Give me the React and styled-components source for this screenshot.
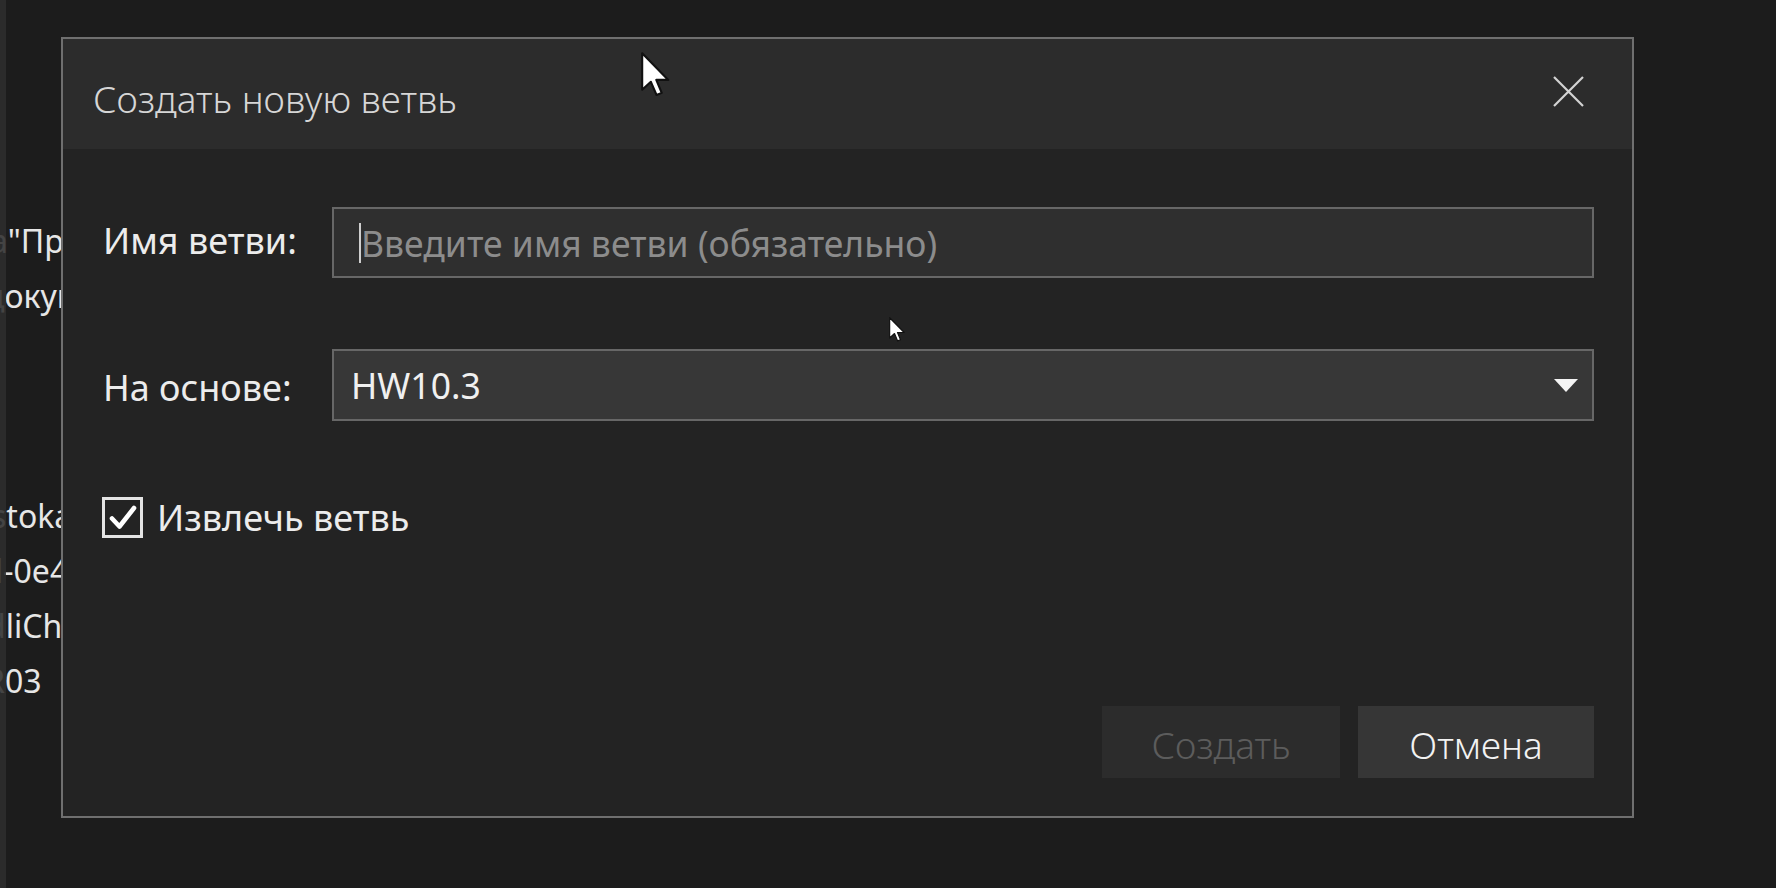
import React from "react";
import styled, { createGlobalStyle } from "styled-components";

const GlobalStyle = createGlobalStyle`
  html, body {
    margin: 0;
    padding: 0;
    background: #1e1e1e;
  }
  body {
    font-family: "Noto Sans", "Open Sans", "DejaVu Sans", sans-serif;
  }
`;

const Page = styled.div`
  position: relative;
  width: 1776px;
  height: 888px;
  overflow: hidden;
  background: #1c1c1c;
  display: flex;
`;

// strip of the document visible left of the dialog
const DocPane = styled.div`
  width: 61px;
  flex-shrink: 0;
  overflow: hidden;
  display: flex;
  flex-direction: column;
  padding-top: 213px;
  color: #e6e6e6;
  font-size: 32px;
  line-height: 55px;
  white-space: nowrap;
`;

const DocLine = styled.div`
  height: 55px;
  margin-left: ${({ $shift }) => $shift}px;
`;

const Splitter = styled.div`
  position: absolute;
  left: 0;
  top: 0;
  bottom: 0;
  width: 6px;
  background: rgba(46, 46, 46, 0.88);
`;

const Dialog = styled.div`
  position: absolute;
  left: 61px;
  top: 37px;
  width: 1573px;
  height: 781px;
  box-sizing: border-box;
  border: 2px solid #6f6f6f;
  background: #232323;
  display: flex;
  flex-direction: column;
`;

const Header = styled.div`
  height: 110px;
  flex-shrink: 0;
  background: #2c2c2c;
  display: flex;
  align-items: center;
  justify-content: space-between;
  padding: 8px 47px 0 30px;
  box-sizing: border-box;
`;

const Title = styled.div`
  color: #d6d6d6;
  font-size: 37px;
  font-weight: 300;
`;

const CloseButton = styled.button`
  width: 33px;
  height: 33px;
  margin-top: -14px;
  padding: 0;
  border: none;
  background: transparent;
  display: flex;
  align-items: center;
  justify-content: center;
`;

const Body = styled.div`
  flex: 1;
  display: flex;
  flex-direction: column;
  padding: 58px 38px 38px 39px;
`;

const Form = styled.div`
  display: grid;
  grid-template-columns: 230px 1fr;
  row-gap: 71px;
  align-items: center;
`;

const Label = styled.label`
  color: #ececec;
  font-size: 36px;
  padding-left: 1px;
  margin-top: ${({ $dy }) => $dy * 2}px;
`;

const Field = styled.div`
  height: ${({ $h }) => $h}px;
  box-sizing: border-box;
  border: 2px solid #676767;
  background: ${({ $bg }) => $bg};
  display: flex;
  align-items: center;
  padding: 0 14px 0 ${({ $pl }) => $pl}px;
  font-size: 35.5px;
  color: #f0f0f0;
`;

const Caret = styled.span`
  width: 2px;
  height: 40px;
  background: #cfcfcf;
  flex-shrink: 0;
`;

const TextInput = styled.input`
  flex: 1;
  border: none;
  outline: none;
  background: transparent;
  font: inherit;
  color: #f0f0f0;
  padding: 0;
  &::placeholder {
    color: #8c8c8c;
  }
`;

const SelectValue = styled.span`
  flex: 1;
`;

const CheckRow = styled.label`
  margin-top: 72px;
  display: flex;
  align-items: center;
  gap: 14px;
  color: #ececec;
  font-size: 36px;
`;

const CheckBox = styled.span`
  width: 41px;
  height: 41px;
  box-sizing: border-box;
  border: 3.5px solid #e4e4e4;
  display: flex;
  align-items: center;
  justify-content: center;
`;

const Footer = styled.div`
  margin-top: auto;
  display: flex;
  justify-content: flex-end;
  gap: 18px;
`;

const Button = styled.button`
  width: ${({ $w }) => $w}px;
  height: 72px;
  border: none;
  background: ${({ disabled }) => (disabled ? "#2c2c2c" : "#363636")};
  color: ${({ disabled }) => (disabled ? "#5c5c5c" : "#f2f2f2")};
  font-family: inherit;
  font-size: 37px;
  font-weight: 300;
  padding: 0;
  padding-top: 4px;
`;

const Cursor = styled.svg`
  position: absolute;
  left: ${({ $x }) => $x}px;
  top: ${({ $y }) => $y}px;
`;

function Arrow({ x, y, h }) {
  return (
    <Cursor $x={x} $y={y} width={h * 0.68} height={h} viewBox="0 0 13 19">
      <path
        d="M0.5 0.5 L0.5 16 L4.2 12.6 L6.6 18.2 L8.8 17.3 L6.5 11.8 L11.6 11.8 Z"
        fill="#ffffff"
        stroke="#111111"
        strokeWidth="0.9"
        strokeLinejoin="round"
      />
    </Cursor>
  );
}

const docLines = [
  { text: 'a"Программа', shift: -10 },
  { text: "документ", shift: -15 },
  { text: "", shift: 0 },
  { text: "", shift: 0 },
  { text: "", shift: 0 },
  { text: "stokari", shift: -9 },
  { text: "l-0e4b", shift: -5 },
  { text: "dliChange", shift: -14 },
  { text: "R03", shift: -15 },
];

export default function App() {
  return (
    <>
      <GlobalStyle />
      <Page>
        <DocPane>
          {docLines.map((l, i) => (
            <DocLine key={i} $shift={l.shift}>
              {l.text}
            </DocLine>
          ))}
        </DocPane>
        <Splitter />

        <Dialog>
          <Header>
            <Title>Создать новую ветвь</Title>
            <CloseButton aria-label="Закрыть">
              <svg width="33" height="33" viewBox="0 0 33 33">
                <path d="M2 2 L31 31 M31 2 L2 31" stroke="#d4d4d4" strokeWidth="2.2" />
              </svg>
            </CloseButton>
          </Header>

          <Body>
            <Form>
              <Label $dy={-2}>Имя ветви:</Label>
              <Field $h={71} $bg="#2f2f2f" $pl={25}>
                <Caret />
                <TextInput placeholder="Введите имя ветви (обязательно)" />
              </Field>

              <Label $dy={2}>На основе:</Label>
              <Field $h={72} $bg="#373737" $pl={17}>
                <SelectValue>HW10.3</SelectValue>
                <svg width="24" height="13" viewBox="0 0 24 13">
                  <path d="M0 0 L24 0 L12 13 Z" fill="#f4f4f4" />
                </svg>
              </Field>
            </Form>

            <CheckRow>
              <CheckBox>
                <svg width="30" height="30" viewBox="0 0 30 30">
                  <path
                    d="M4 15.5 L11.5 23.5 L26 5"
                    fill="none"
                    stroke="#ffffff"
                    strokeWidth="4.6"
                    strokeLinecap="round"
                    strokeLinejoin="round"
                  />
                </svg>
              </CheckBox>
              Извлечь ветвь
            </CheckRow>

            <Footer>
              <Button $w={238} disabled>
                Создать
              </Button>
              <Button $w={236}>Отмена</Button>
            </Footer>
          </Body>
        </Dialog>

        <Arrow x={641} y={52} h={45} />
        <Arrow x={889} y={317} h={25} />
      </Page>
    </>
  );
}
